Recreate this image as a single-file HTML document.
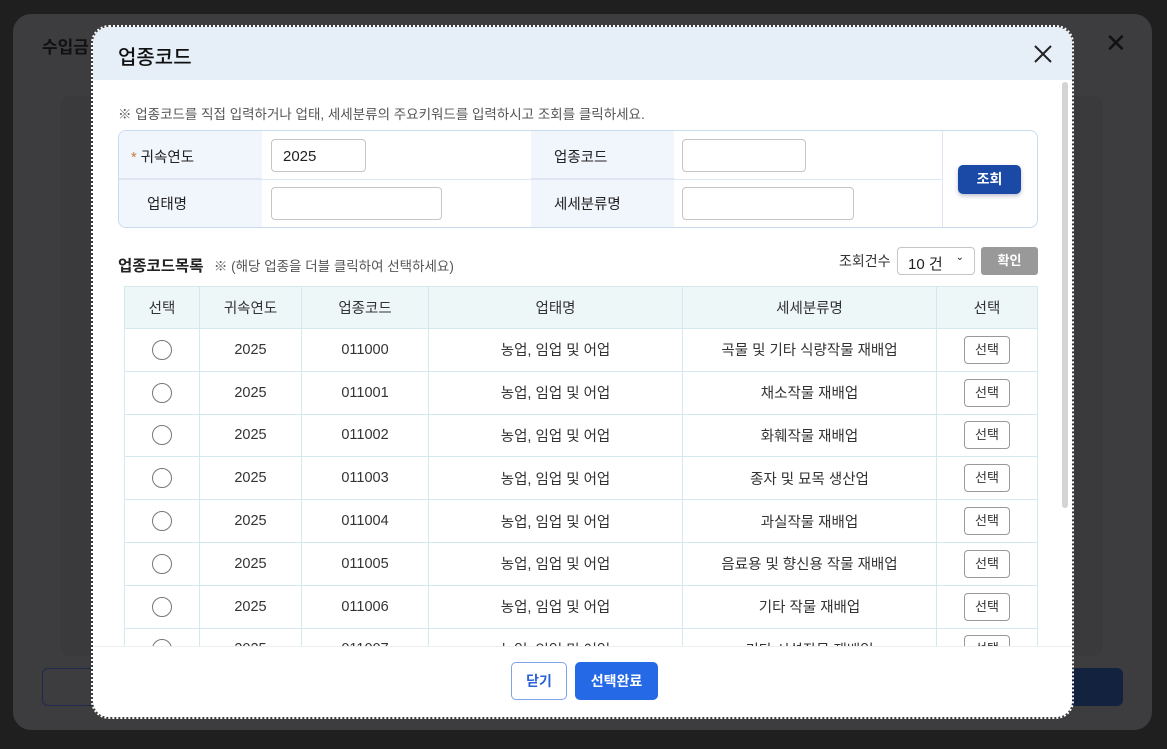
<!DOCTYPE html>
<html><head><meta charset="utf-8"><style>
*{box-sizing:border-box;margin:0;padding:0}
body{width:1167px;height:749px;overflow:hidden;background:#1f1f1f;font-family:"Liberation Sans","Noto Sans CJK KR",sans-serif;color:#222;position:relative}
.abs{position:absolute}
.under{left:13px;top:14px;width:1139px;height:716px;background:#3d3d3f;border-radius:18px}
.modal{left:93px;top:27px;width:979px;height:690px;background:#fff;border-radius:16px;overflow:hidden;outline:2px dotted #fff;outline-offset:0}
.hdr{left:0;top:0;width:979px;height:53px;background:#e6eef8}
.hdr h1{position:absolute;left:25px;top:14px;font-size:20px;font-weight:500;color:#111}
.note{font-size:13.5px;color:#555}
.box{left:25px;top:103px;width:920px;height:98px;border:1px solid #c9dbf1;border-radius:8px;overflow:hidden}
.lbl{background:#f1f5fc;font-size:14px;color:#333}
.inp{border:1px solid #c5c5c5;border-radius:4px;background:#fff;height:33px;font-size:15px;padding:8px 11px}
table{border-collapse:collapse;font-size:14.5px;color:#333}
td,th{border:1px solid #d3e8ef;text-align:center;height:42.8px;padding:0}
th{background:#edf7f8;font-weight:normal;height:42px}
.radio{display:inline-block;width:20px;height:20px;border:1px solid #777;border-radius:50%;vertical-align:middle}
.sb{display:inline-block;width:46px;height:28px;border:1px solid #999;border-radius:4px;font-size:13px;line-height:26px;background:#fff}
</style></head><body>
<div class="abs under"></div>
<div class="abs" style="left:42px;top:33px;font-size:17px;font-weight:bold;color:#111">수입금</div>
<div class="abs" style="left:60px;top:96px;width:1043px;height:560px;background:#3a3a3c;border-radius:10px"></div>
<div class="abs" style="left:1105px;top:28px;font-size:26px;color:#111">✕</div>
<div class="abs" style="left:42px;top:668px;width:60px;height:38px;border:1px solid #1d2a4a;border-radius:6px"></div>
<div class="abs" style="left:1070px;top:668px;width:53px;height:38px;background:#13233f;border-radius:6px"></div>

<div class="abs modal">
 <div class="abs hdr"><h1>업종코드</h1>
  <svg class="abs" style="left:941px;top:18px" width="18" height="18" viewBox="0 0 18 18"><path d="M1 1L17 17M17 1L1 17" stroke="#222" stroke-width="2"/></svg>
 </div>
 <div class="abs" style="left:969px;top:55px;width:6px;height:426px;background:#d4d4d4;border-radius:3px"></div>
 <div class="abs note" style="left:25px;top:76px">※ 업종코드를 직접 입력하거나 업태, 세세분류의 주요키워드를 입력하시고 조회를 클릭하세요.</div>
 <div class="abs box">
  <div class="abs lbl" style="left:0;top:0;width:143px;height:48px;border-bottom:1px solid #dde6f2"></div>
  <div class="abs lbl" style="left:0;top:48px;width:143px;height:50px"></div>
  <div class="abs lbl" style="left:412px;top:0;width:143px;height:48px;border-bottom:1px solid #dde6f2"></div>
  <div class="abs lbl" style="left:412px;top:48px;width:143px;height:50px"></div>
  <div class="abs" style="left:0;top:48px;width:823px;border-top:1px solid #dde6f2"></div>
  <div class="abs" style="left:823px;top:0;height:98px;border-left:1px solid #dde6f2"></div>
  <div class="abs" style="left:12px;top:15px;font-size:14.5px"><span style="color:#c97a3a">*</span> 귀속연도</div>
  <div class="abs" style="left:28px;top:62px;font-size:14.5px">업태명</div>
  <div class="abs" style="left:435px;top:15px;font-size:14.5px">업종코드</div>
  <div class="abs" style="left:435px;top:62px;font-size:14.5px">세세분류명</div>
  <div class="abs inp" style="left:152px;top:8px;width:95px">2025</div>
  <div class="abs inp" style="left:152px;top:56px;width:171px"></div>
  <div class="abs inp" style="left:563px;top:8px;width:124px"></div>
  <div class="abs inp" style="left:563px;top:56px;width:172px"></div>
  <div class="abs" style="left:839px;top:34px;width:63px;height:29px;background:#1b4aa6;border-radius:5px;color:#fff;font-size:14px;font-weight:bold;text-align:center;line-height:29px;box-shadow:0 2px 4px rgba(0,0,80,.25)">조회</div>
 </div>
 <div class="abs" style="left:25px;top:227px;font-size:15.5px;font-weight:bold">업종코드목록 <span class="note" style="font-weight:normal;margin-left:6px">※ (해당 업종을 더블 클릭하여 선택하세요)</span></div>
 <div class="abs" style="left:746px;top:224px;font-size:14px;color:#333">조회건수</div>
 <div class="abs" style="left:804px;top:220px;width:78px;height:28px;border:1px solid #c5c5c5;border-radius:4px;font-size:15px;padding:5px 10px">10 건 <span style="position:absolute;right:10px;top:4px;font-size:10px">⌄</span></div>
 <div class="abs" style="left:888px;top:220px;width:57px;height:28px;background:#999;border-radius:3px;color:#fff;font-size:13px;font-weight:bold;text-align:center;line-height:28px">확인</div>
 <div class="abs" style="left:31px;top:259px">
 <table>
  <tr><th style="width:75px">선택</th><th style="width:102px">귀속연도</th><th style="width:127px">업종코드</th><th style="width:254px">업태명</th><th style="width:254px">세세분류명</th><th style="width:101px">선택</th></tr>
  <tr><td><span class="radio"></span></td><td>2025</td><td>011000</td><td>농업, 임업 및 어업</td><td>곡물 및 기타 식량작물 재배업</td><td><span class="sb">선택</span></td></tr>
  <tr><td><span class="radio"></span></td><td>2025</td><td>011001</td><td>농업, 임업 및 어업</td><td>채소작물 재배업</td><td><span class="sb">선택</span></td></tr>
  <tr><td><span class="radio"></span></td><td>2025</td><td>011002</td><td>농업, 임업 및 어업</td><td>화훼작물 재배업</td><td><span class="sb">선택</span></td></tr>
  <tr><td><span class="radio"></span></td><td>2025</td><td>011003</td><td>농업, 임업 및 어업</td><td>종자 및 묘목 생산업</td><td><span class="sb">선택</span></td></tr>
  <tr><td><span class="radio"></span></td><td>2025</td><td>011004</td><td>농업, 임업 및 어업</td><td>과실작물 재배업</td><td><span class="sb">선택</span></td></tr>
  <tr><td><span class="radio"></span></td><td>2025</td><td>011005</td><td>농업, 임업 및 어업</td><td>음료용 및 향신용 작물 재배업</td><td><span class="sb">선택</span></td></tr>
  <tr><td><span class="radio"></span></td><td>2025</td><td>011006</td><td>농업, 임업 및 어업</td><td>기타 작물 재배업</td><td><span class="sb">선택</span></td></tr>
  <tr><td><span class="radio"></span></td><td>2025</td><td>011007</td><td>농업, 임업 및 어업</td><td>기타 시설작물 재배업</td><td><span class="sb">선택</span></td></tr>
 </table></div>
 <div class="abs" style="left:0;top:619px;width:979px;height:71px;background:#fff;border-top:1px solid #eee"></div>
 <div class="abs" style="left:418px;top:635px;width:56px;height:38px;border:1px solid #7fa3ea;border-radius:5px;color:#2b62d8;font-size:14px;font-weight:bold;text-align:center;line-height:36px">닫기</div>
 <div class="abs" style="left:482px;top:635px;width:83px;height:38px;background:#2669e6;border-radius:5px;color:#fff;font-size:14px;font-weight:bold;text-align:center;line-height:38px">선택완료</div>
</div>
</body></html>
